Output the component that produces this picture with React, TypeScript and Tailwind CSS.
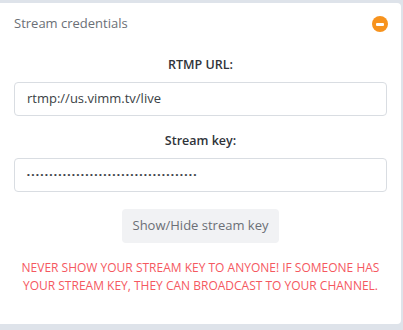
export default function App() {
  return (
    <div className="w-[403px] h-[330px] bg-[#dee3ea] pt-[3px] pr-[2px] font-['Open_Sans',sans-serif]">
      <div className="w-[401px] h-[321px] bg-white rounded-r-[4px] flex flex-col">
        <div className="flex items-center justify-between pl-[14px] pr-[13px] h-[42px]">
          <span className="text-[13px] text-[#6b6f76]">Stream credentials</span>
          <span className="w-[16px] h-[16px] rounded-full bg-[#f7931e] flex items-center justify-center">
            <span className="w-[8px] h-[3px] bg-white rounded-[1px]" />
          </span>
        </div>
        <div className="flex flex-col items-center px-[14px]">
          <label className="mt-[10px] text-[12.5px] leading-[20px] font-semibold text-[#30343a]">RTMP URL:</label>
          <div className="mt-[7px] w-[373px] h-[34px] border border-[#d9dde2] rounded-[4px] flex items-center px-[12px] text-[13px] text-[#3b3f46]">
            rtmp://us.vimm.tv/live
          </div>
          <label className="mt-[15px] text-[12.5px] leading-[20px] font-semibold text-[#30343a]">Stream key:</label>
          <div className="mt-[7px] w-[373px] h-[34px] border border-[#d9dde2] rounded-[4px] flex items-center px-[12px] text-[#3b3f46]">
            <span className="font-['Liberation_Sans',sans-serif] text-[8px] tracking-[1.7px]">
              ••••••••••••••••••••••••••••••••••••••
            </span>
          </div>
          <button className="mt-[17px] w-[157px] h-[34px] bg-[#f1f2f4] rounded-[4px] text-[13px] text-[#6b6f76]">
            Show/Hide stream key
          </button>
          <p className="mt-[16px] text-center text-[12px] leading-[18px] text-[#f5585f] uppercase">
            Never show your stream key to anyone! If someone has your stream key, they can broadcast to your channel.
          </p>
        </div>
      </div>
    </div>
  );
}
